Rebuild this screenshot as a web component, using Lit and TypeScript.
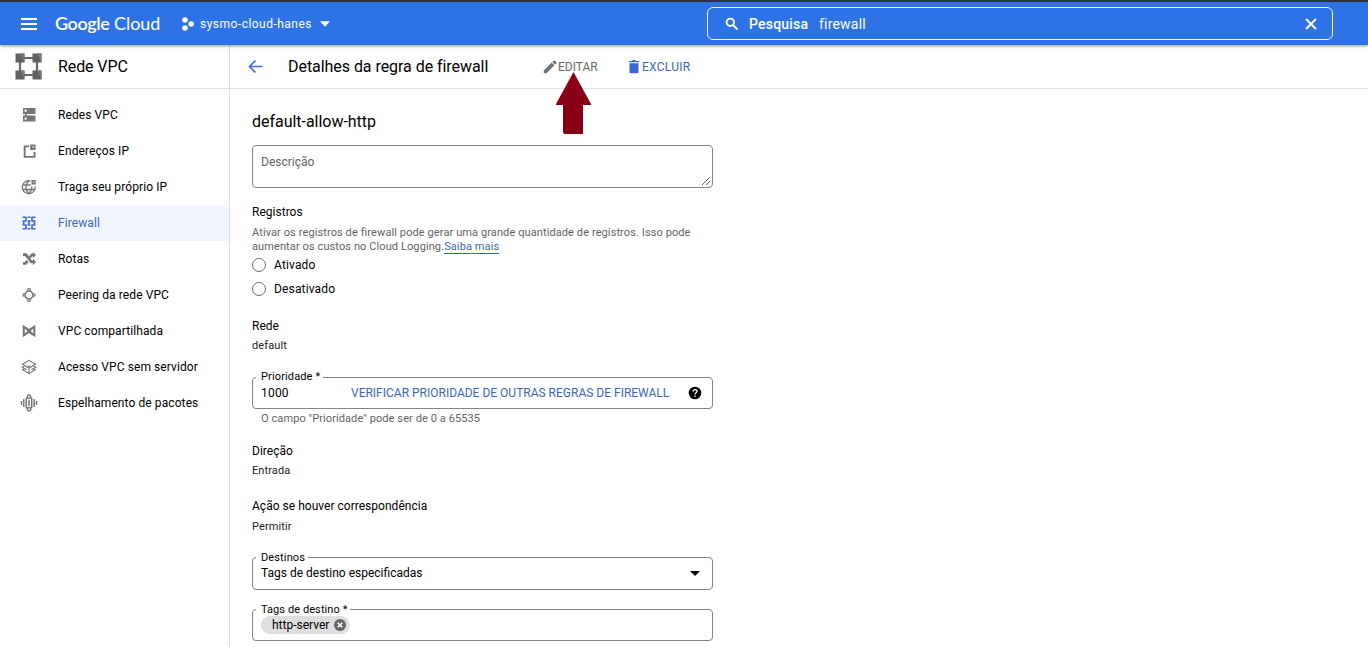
import { LitElement, html, css, svg } from "lit";
import { customElement } from "lit/decorators.js";
import { classMap } from "lit/directives/class-map.js";

const icon = (body: unknown, size = 18) =>
  html`<svg width=${size} height=${size} viewBox="0 0 18 18" fill="currentColor">${body}</svg>`;

const icons = {
  networks: svg`<path fill-rule="evenodd" d="M3 2h12.500v6H3zM3 9.500h12.500v6H3zM4.600 3.600v2.200h2V3.600zM4.600 11.600v2.200h2v-2.200z"/><path d="M5 7h1.600v4H5z"/>`,
  address: svg`<path d="M4 3.500h5v1.800H5.600v8.600h8V10h1.900v5.700H3.700V3.500z"/><path fill-rule="evenodd" d="M10.200 2.500h5.300v5.500h-5.300zM12.500 4.300v1.400h1.300V4.300z"/>`,
  globe: svg`<g fill="none" stroke="currentColor" stroke-width="1.300"><path d="M10.500 2.900A6.500 6.500 0 1 0 15.200 8.500M9 2.700C5 6 5 12 8.800 15.700C11 13.500 12 11 11.900 8.500M2.700 7h8M2.700 11.500h12"/></g><path fill-rule="evenodd" d="M11.500 2h4.300v4.500h-4.300zM13.200 3.500v1.300h1.200V3.500z"/>`,
  firewall: svg`<g fill="none" stroke="currentColor" stroke-width="1.500"><path d="M2.500 3.200h4M7.500 3.200h3M11.500 3.200h4M2.500 7h4M7.500 7h3M11.500 7h4M2.500 11h4M7.500 11h3M11.500 11h4M2.500 14.800h4M7.500 14.800h3M11.500 14.800h4"/><path d="M6 3v4M12 3v4M3.700 7v4M9 7v4M14.300 7v4M6 11v4M12 11v4" stroke-width="1.700"/></g>`,
  routes: svg`<path d="M3 3.200h3.500l5.500 7.300h.9V8.800l3.100 3.200-3.100 3.200v-2h-2.200L5.100 6H3z"/><path d="M3 12h1.800l2-2.300 1.700 2.200-2.200 2.800H3zM8.900 6.400L11 3.700h1.900V2L16 5l-3.100 3V6.300h-.7l-1.600 2.200z"/>`,
  peering: svg`<g fill="none" stroke="currentColor" stroke-width="1.300"><circle cx="9" cy="4" r="1.400"/><circle cx="9" cy="14" r="1.400"/><circle cx="4.200" cy="9" r="1.200"/><circle cx="13.800" cy="9" r="1.200"/><path d="M7.600 4.800L5 7.800M10.400 4.800L13 7.800M5 10.200l2.600 3M13 10.200l-2.600 3"/></g>`,
  shared: svg`<path fill-rule="evenodd" d="M2.800 2.800L9 7l6.300-4.200v12.400L9 11l-6.200 4.200zM4.800 6.500v5L7.400 9zM13.300 6.500v5L10.700 9z"/>`,
  serverless: svg`<g fill="none" stroke="currentColor" stroke-width="1.100"><path d="M7 8.800L2.500 6.300L9 2.300l6.500 4L11 8.800M4.500 7.800L2.300 9.200l2.400 1.500M13.500 7.800l2.200 1.400-2.400 1.500M6.500 11.800L4.700 10.700l-2 1.100L9 15.700l6.300-3.900-2-1.100-1.800 1.100M9 15.500V8M6.800 10l2.200-2 2.200 2"/></g>`,
  mirroring: svg`<g fill="none" stroke="currentColor" stroke-width="1.500"><circle cx="9" cy="2.800" r="1.700"/><circle cx="9" cy="15.200" r="1.700"/><path d="M9 6v6M6.300 3.500v11M11.700 3.500v11M3.800 5v8M14.200 5v8M1.500 7v4M16.500 7v4"/></g>`,
};

const navItems = [
  { icon: icons.networks, label: "Redes VPC" },
  { icon: icons.address, label: "Endereços IP" },
  { icon: icons.globe, label: "Traga seu próprio IP" },
  { icon: icons.firewall, label: "Firewall", active: true },
  { icon: icons.routes, label: "Rotas" },
  { icon: icons.peering, label: "Peering da rede VPC" },
  { icon: icons.shared, label: "VPC compartilhada" },
  { icon: icons.serverless, label: "Acesso VPC sem servidor" },
  { icon: icons.mirroring, label: "Espelhamento de pacotes" },
];

@customElement("cloud-header")
class CloudHeader extends LitElement {
  static styles = css`
    :host { display: block; position: relative; z-index: 1; }
    .bar {
      box-sizing: border-box; height: 45px; border-top: 2px solid #30343e; background: #2d73e5;
      box-shadow: 0 1px 3px rgba(40, 50, 70, .55); color: #fff; display: flex; align-items: center;
      padding: 0 35px 0 20px; font: 12px Roboto, sans-serif;
    }
    svg { display: block; flex: none; }
    .logo { margin-left: 17px; width: 106px; padding-bottom: 1px; font: 18px/20px Lato, Roboto, sans-serif; letter-spacing: -.05px; white-space: nowrap; }
    .google { font-weight: 600; letter-spacing: -.4px; }
    .project { display: flex; align-items: center; margin-left: 20px; white-space: nowrap; }
    .name { margin-left: 5px; width: 120px; letter-spacing: .48px; }
    .search {
      box-sizing: border-box; width: 626px; height: 33px; margin-left: auto; border: 1px solid #f4f8ff;
      border-radius: 6px; display: flex; align-items: center; padding: 0 14px 0 17px; font-size: 14px;
    }
    .label { font-weight: 500; margin-left: 10px; width: 70px; letter-spacing: .2px; }
    .query { flex: 1; letter-spacing: .2px; }
  `;
  render() {
    return html`<header class="bar">
      <svg width="18" height="14" viewBox="0 0 18 14"><path d="M1 2h16M1 7h16M1 12h16" stroke="#fff" stroke-width="1.800"/></svg>
      <div class="logo"><span class="google">Google</span> Cloud</div>
      <div class="project">
        <svg width="14" height="16" viewBox="0 0 14 16" fill="#fff"><circle cx="4" cy="4" r="2.800"/><circle cx="4" cy="12" r="2.800"/><circle cx="10.200" cy="8" r="2.800"/></svg>
        <span class="name">sysmo-cloud-hanes</span>
        <svg width="10" height="6" viewBox="0 0 10 6"><path d="M0 .3h10L5 5.800z" fill="#fff"/></svg>
      </div>
      <div class="search">
        <svg width="14" height="14" viewBox="0 0 14 14" fill="none" stroke="#fff" stroke-width="1.900"><circle cx="5.300" cy="5.300" r="3.700"/><path d="M8 8l4.500 4.500"/></svg>
        <span class="label">Pesquisa</span><span class="query">firewall</span>
        <svg width="14" height="14" viewBox="0 0 14 14"><path d="M2 2l10 10M12 2L2 12" stroke="#fff" stroke-width="2"/></svg>
      </div>
    </header>`;
  }
}

@customElement("side-nav")
class SideNav extends LitElement {
  static styles = css`
    :host { display: block; width: 229px; border-right: 1px solid #dcdee0; font-family: Roboto, sans-serif; color: #000; }
    .title { box-sizing: border-box; height: 44px; border-bottom: 1px solid #dfe0e2; display: flex; align-items: center; padding: 0 0 0 15px; font-size: 16px; letter-spacing: -.1px; }
    .title span { margin-left: 16px; }
    .items { padding-top: 8px; }
    .item { height: 36px; display: flex; align-items: center; padding-left: 20px; font-size: 12px; letter-spacing: .09px; }
    .item svg { color: #757575; flex: none; }
    .item span { margin-left: 20px; white-space: nowrap; }
    .active { background: #f0f5fe; color: #3b66bd; }
    .active svg { color: #456ec5; }
  `;
  render() {
    return html`
      <div class="title">
        <svg width="27" height="27" viewBox="0 0 27 27"><path d="M5 5h17v17H5z" fill="none" stroke="#686868" stroke-width="2.200"/><path d="M.5.500h9v9h-9zM17.500.500h9v9h-9zM.5 17.500h9v9h-9zM17.500 17.500h9v9h-9z" fill="#626262"/><path d="M5 .5h4.500v9zM22 .5h4.500v9zM5 17.500h4.500v9zM22 17.500h4.500v9z" fill="#777"/></svg>
        <span>Rede VPC</span>
      </div>
      <nav class="items">
        ${navItems.map((n) => html`<div class=${classMap({ item: true, active: !!n.active })}>${icon(n.icon)}<span>${n.label}</span></div>`)}
      </nav>`;
  }
}

@customElement("app-root")
class AppRoot extends LitElement {
  static styles = css`
    :host { display: flex; flex-direction: column; height: 647px; overflow: hidden; background: #fff; font-family: Roboto, sans-serif; color: #000; }
    .body { display: flex; flex: 1; min-height: 0; }
    .main { flex: 1; min-width: 0; }
    svg { display: block; flex: none; }
    .toolbar { box-sizing: border-box; height: 44px; border-bottom: 1px solid #dfe0e2; display: flex; align-items: center; padding-left: 18px; white-space: nowrap; }
    .heading { font-size: 16px; margin-left: 24px; width: 255px; letter-spacing: -.05px; }
    .action { display: flex; align-items: center; font-size: 12px; }
    .edit { color: #6b6b6b; width: 85px; position: relative; }
    .edit span { margin-left: 1px; }
    .delete { color: #3b66bd; letter-spacing: .25px; }
    .delete svg { margin-right: 2px; }
    .pointer { position: absolute; left: 13px; top: 12px; z-index: 2; }
    .form { width: 461px; padding: 21px 0 0 22px; font-size: 12px; }
    .rule { font-size: 16px; line-height: 24px; letter-spacing: -.03px; }
    .area { box-sizing: border-box; height: 43px; margin-top: 11px; border: 1px solid #80868b; border-radius: 4px; padding: 8px 1px 1px 8px; display: flex; justify-content: space-between; line-height: 16px; color: #5f6368; }
    .area svg { align-self: flex-end; }
    .term { line-height: 20px; height: 20px; letter-spacing: .02px; }
    .value { line-height: 20px; height: 20px; font-size: 11px; color: #202124; letter-spacing: .1px; }
    .logs { margin-top: 14px; }
    .note { margin: 4px 0 -1px; font-size: 11px; line-height: 14px; color: #5f6368; letter-spacing: .1px; white-space: nowrap; }
    .link { color: #3b66bd; border-bottom: 1px solid #3b66bd; }
    .radio { display: flex; align-items: center; height: 24px; letter-spacing: .15px; }
    .dot { box-sizing: border-box; width: 14px; height: 14px; border: 1px solid #6b6b6b; border-radius: 50%; margin-right: 8px; }
    .net { margin-top: 15px; }
    .field { box-sizing: border-box; margin: 0; min-width: 0; border: 1px solid #80868b; border-radius: 4px; padding: 0 9px 0 8px; height: 39px; }
    .legend { padding: 0 3px 0 5px; margin-left: -5px; font-size: 11px; line-height: 14px; height: 14px; letter-spacing: .13px; }
    .control { height: 18px; display: flex; align-items: center; }
    .priority { margin-top: 14px; }
    .amount { width: 90px; letter-spacing: .2px; }
    .verify { color: #3b66bd; flex: 1; white-space: nowrap; }
    .hint { margin-left: 9px; font-size: 11px; line-height: 20px; color: #5f6368; letter-spacing: .09px; }
    .direction { margin-top: 12px; }
    .match { margin: 15px 0 1px; }
    .targets { margin-top: 13px; height: 40px; }
    .targets .legend, .tags .legend { line-height: 16px; }
    .targets .control { justify-content: space-between; }
    .arrow { margin-right: 3px; }
    .tags { margin-top: 12px; }
    .tags .legend { letter-spacing: .08px; }
    .chip { display: flex; align-items: center; height: 18px; border-radius: 9px; background: #dedede; padding: 0 4px 0 11px; }
    .chip svg { margin-left: 5px; }
    .help { margin-right: 1px; }
  `;
  render() {
    return html`
      <cloud-header></cloud-header>
      <div class="body">
        <side-nav></side-nav>
        <main class="main">
          <div class="toolbar">
            <svg width="16" height="16" viewBox="0 0 16 16" fill="none" stroke="#456ed0" stroke-width="1.700"><path d="M14.500 7.500H2M7.500 1.500L1.500 7.500L7.500 13.500"/></svg>
            <div class="heading">Detalhes da regra de firewall</div>
            <div class="action edit">
              <svg width="14" height="14" viewBox="0 0 14 14" fill="#707070"><path d="M.8 10.500L8.700 2.600l2.700 2.700L3.500 13.200H.8zM9.400 1.900L10.600.7q.6-.5 1.200 0l1.500 1.500q.5.600 0 1.200l-1.200 1.200z"/></svg>
              <span>EDITAR</span>
              <svg class="pointer" width="36" height="63" viewBox="0 0 36 63"><path d="M17.500 0L35 32v1h-8v29H8l-1-2V33H0v-1z" fill="#880015"/></svg>
            </div>
            <div class="action delete">
              <svg width="12" height="14" viewBox="0 0 12 14" fill="#3b66d0"><path d="M1 2.200V.9h3L4.800 0h2.400L8 .9h3v1.300zM1.500 3.200h9V12q0 1.300-1.300 1.300H2.800Q1.500 13.300 1.500 12z"/></svg>
              <span>EXCLUIR</span>
            </div>
          </div>
          <div class="form">
            <div class="rule">default-allow-http</div>
            <div class="area"><span>Descrição</span><svg width="10" height="10" viewBox="0 0 10 10"><path d="M1 9L9 1M5 9l4-4" stroke="#666" stroke-width="1"/></svg></div>
            <div class="term logs">Registros</div>
            <div class="note">Ativar os registros de firewall pode gerar uma grande quantidade de registros. Isso pode<br>aumentar os custos no Cloud Logging.<span class="link">Saiba mais</span></div>
            <div class="radio"><span class="dot"></span>Ativado</div>
            <div class="radio"><span class="dot"></span>Desativado</div>
            <div class="term net">Rede</div>
            <div class="value">default</div>
            <fieldset class="field priority">
              <legend class="legend">Prioridade *</legend>
              <div class="control">
                <span class="amount">1000</span><span class="verify">VERIFICAR PRIORIDADE DE OUTRAS REGRAS DE FIREWALL</span>
                <svg class="help" width="14" height="14" viewBox="0 0 14 14"><circle cx="7" cy="7" r="6.300"/><path d="M5 5.500Q5 3.600 7 3.600T9 5.300C9 6.800 7 6.700 7 8.400M7 9.500v1.400" fill="none" stroke="#fff" stroke-width="1.300"/></svg>
              </div>
            </fieldset>
            <div class="hint">O campo "Prioridade" pode ser de 0 a 65535</div>
            <div class="term direction">Direção</div>
            <div class="value">Entrada</div>
            <div class="term match">Ação se houver correspondência</div>
            <div class="value">Permitir</div>
            <fieldset class="field targets">
              <legend class="legend">Destinos</legend>
              <div class="control"><span>Tags de destino especificadas</span>
                <svg class="arrow" width="10" height="5" viewBox="0 0 10 5"><path d="M0 0h10L5 5z"/></svg></div>
            </fieldset>
            <fieldset class="field tags">
              <legend class="legend">Tags de destino *</legend>
              <div class="control"><div class="chip">http-server
                <svg width="12" height="12" viewBox="0 0 12 12"><circle cx="6" cy="6" r="6" fill="#666"/><path d="M3.700 3.700l4.600 4.600M8.300 3.700L3.700 8.300" stroke="#fff" stroke-width="1.600"/></svg></div></div>
            </fieldset>
          </div>
        </main>
      </div>`;
  }
}
